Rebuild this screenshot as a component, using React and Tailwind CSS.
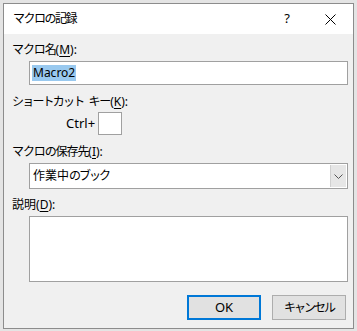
import { useState } from 'react';

const font = { fontFamily: '"Noto Sans", "Noto Sans CJK JP", sans-serif' };

// label with an underlined access key, e.g. マクロ名(M):
const Label = ({ text, hotkey, className = '', track = 'tracking-[-1.1px]' }) => (
  <div className={`h-[16px] pl-[8px] text-[12px] leading-[16px] text-[#000] ${className}`}>
    <span className={track}>{text}</span>(<span className="underline underline-offset-2">{hotkey}</span>):
  </div>
);

const App = () => {
  const [name] = useState('Macro2');

  return (
    <div className="w-[357px] h-[331px] bg-[#e4e4e4] pt-[3px] pl-[3px] overflow-hidden" style={font}>
      <div className="w-[351px] h-[326px] border border-[#8c8c8c] bg-[#f0f0f0] flex flex-col">
        {/* Title bar */}
        <div className="h-[30px] bg-white flex items-center pl-[9px] shrink-0">
          <span className="text-[12px] text-[#000] tracking-[-1.5px]">マクロの記録</span>
          <span className="ml-auto mr-[35px] text-[13px] text-[#000]">?</span>
          <svg width="11" height="11" viewBox="0 0 11 11" className="mr-[17px]">
            <path d="M0.5 0.5 L10.5 10.5 M10.5 0.5 L0.5 10.5" stroke="#000" strokeWidth="1" />
          </svg>
        </div>

        {/* Body */}
        <Label text="マクロ名" hotkey="M" className="mt-[8px]" />
        <div className="mt-[3px] ml-[25px] mr-[5px] h-[24px] border border-[#a0a0a0] bg-white flex items-center pl-[2px]">
          <span className="bg-[#99c9ef] text-[12px] leading-[16px] px-[1px] text-[#000]">{name}</span>
        </div>

        <div className="mt-[9px] h-[16px] pl-[8px] text-[12px] leading-[16px] text-[#000]">
          <span className="tracking-[-1.8px]">ショートカット</span>
          <span className="ml-[5px] tracking-[-1.1px]">キー</span>(<span className="underline underline-offset-2">K</span>):
        </div>
        <div className="mt-[2px] pl-[62px] flex items-center gap-[3px] h-[23px]">
          <span className="text-[13px] text-[#000]">Ctrl+</span>
          <div className="w-[24px] h-[23px] border border-[#a0a0a0] bg-white" />
        </div>

        <Label text="マクロの保存先" hotkey="I" className="mt-[9px]" />
        <div className="mt-[3px] ml-[25px] mr-[5px] h-[26px] border border-[#a0a0a0] bg-white flex items-stretch">
          <span className="flex-1 pl-[3px] flex items-center text-[12px] text-[#000]">
            作業中<span className="tracking-[-2px]">のブック</span>
          </span>
          <div className="w-[16px] m-[1px] bg-[#e6e6e6] border-l border-[#d0d0d0] flex items-center justify-center">
            <svg width="9" height="5" viewBox="0 0 9 5">
              <path d="M0.5 0.5 L4.5 4.5 L8.5 0.5" stroke="#555" strokeWidth="1" fill="none" />
            </svg>
          </div>
        </div>

        <Label text="説明" hotkey="D" className="mt-[8px]" track="tracking-[0px]" />
        <div className="mt-[3px] ml-[25px] mr-[5px] h-[66px] border border-[#a0a0a0] bg-white" />

        {/* Buttons */}
        <div className="mt-[13px] mr-[7px] flex justify-end gap-[11px]">
          <button className="w-[74px] h-[25px] border-2 border-[#0078d7] bg-[#e1e1e1] text-[13px] text-[#000]">
            OK
          </button>
          <button className="w-[74px] h-[25px] border border-[#adadad] bg-[#e1e1e1] text-[12px] text-[#000] tracking-[-2px]">
            キャンセル
          </button>
        </div>
      </div>
    </div>
  );
};

export default App;
